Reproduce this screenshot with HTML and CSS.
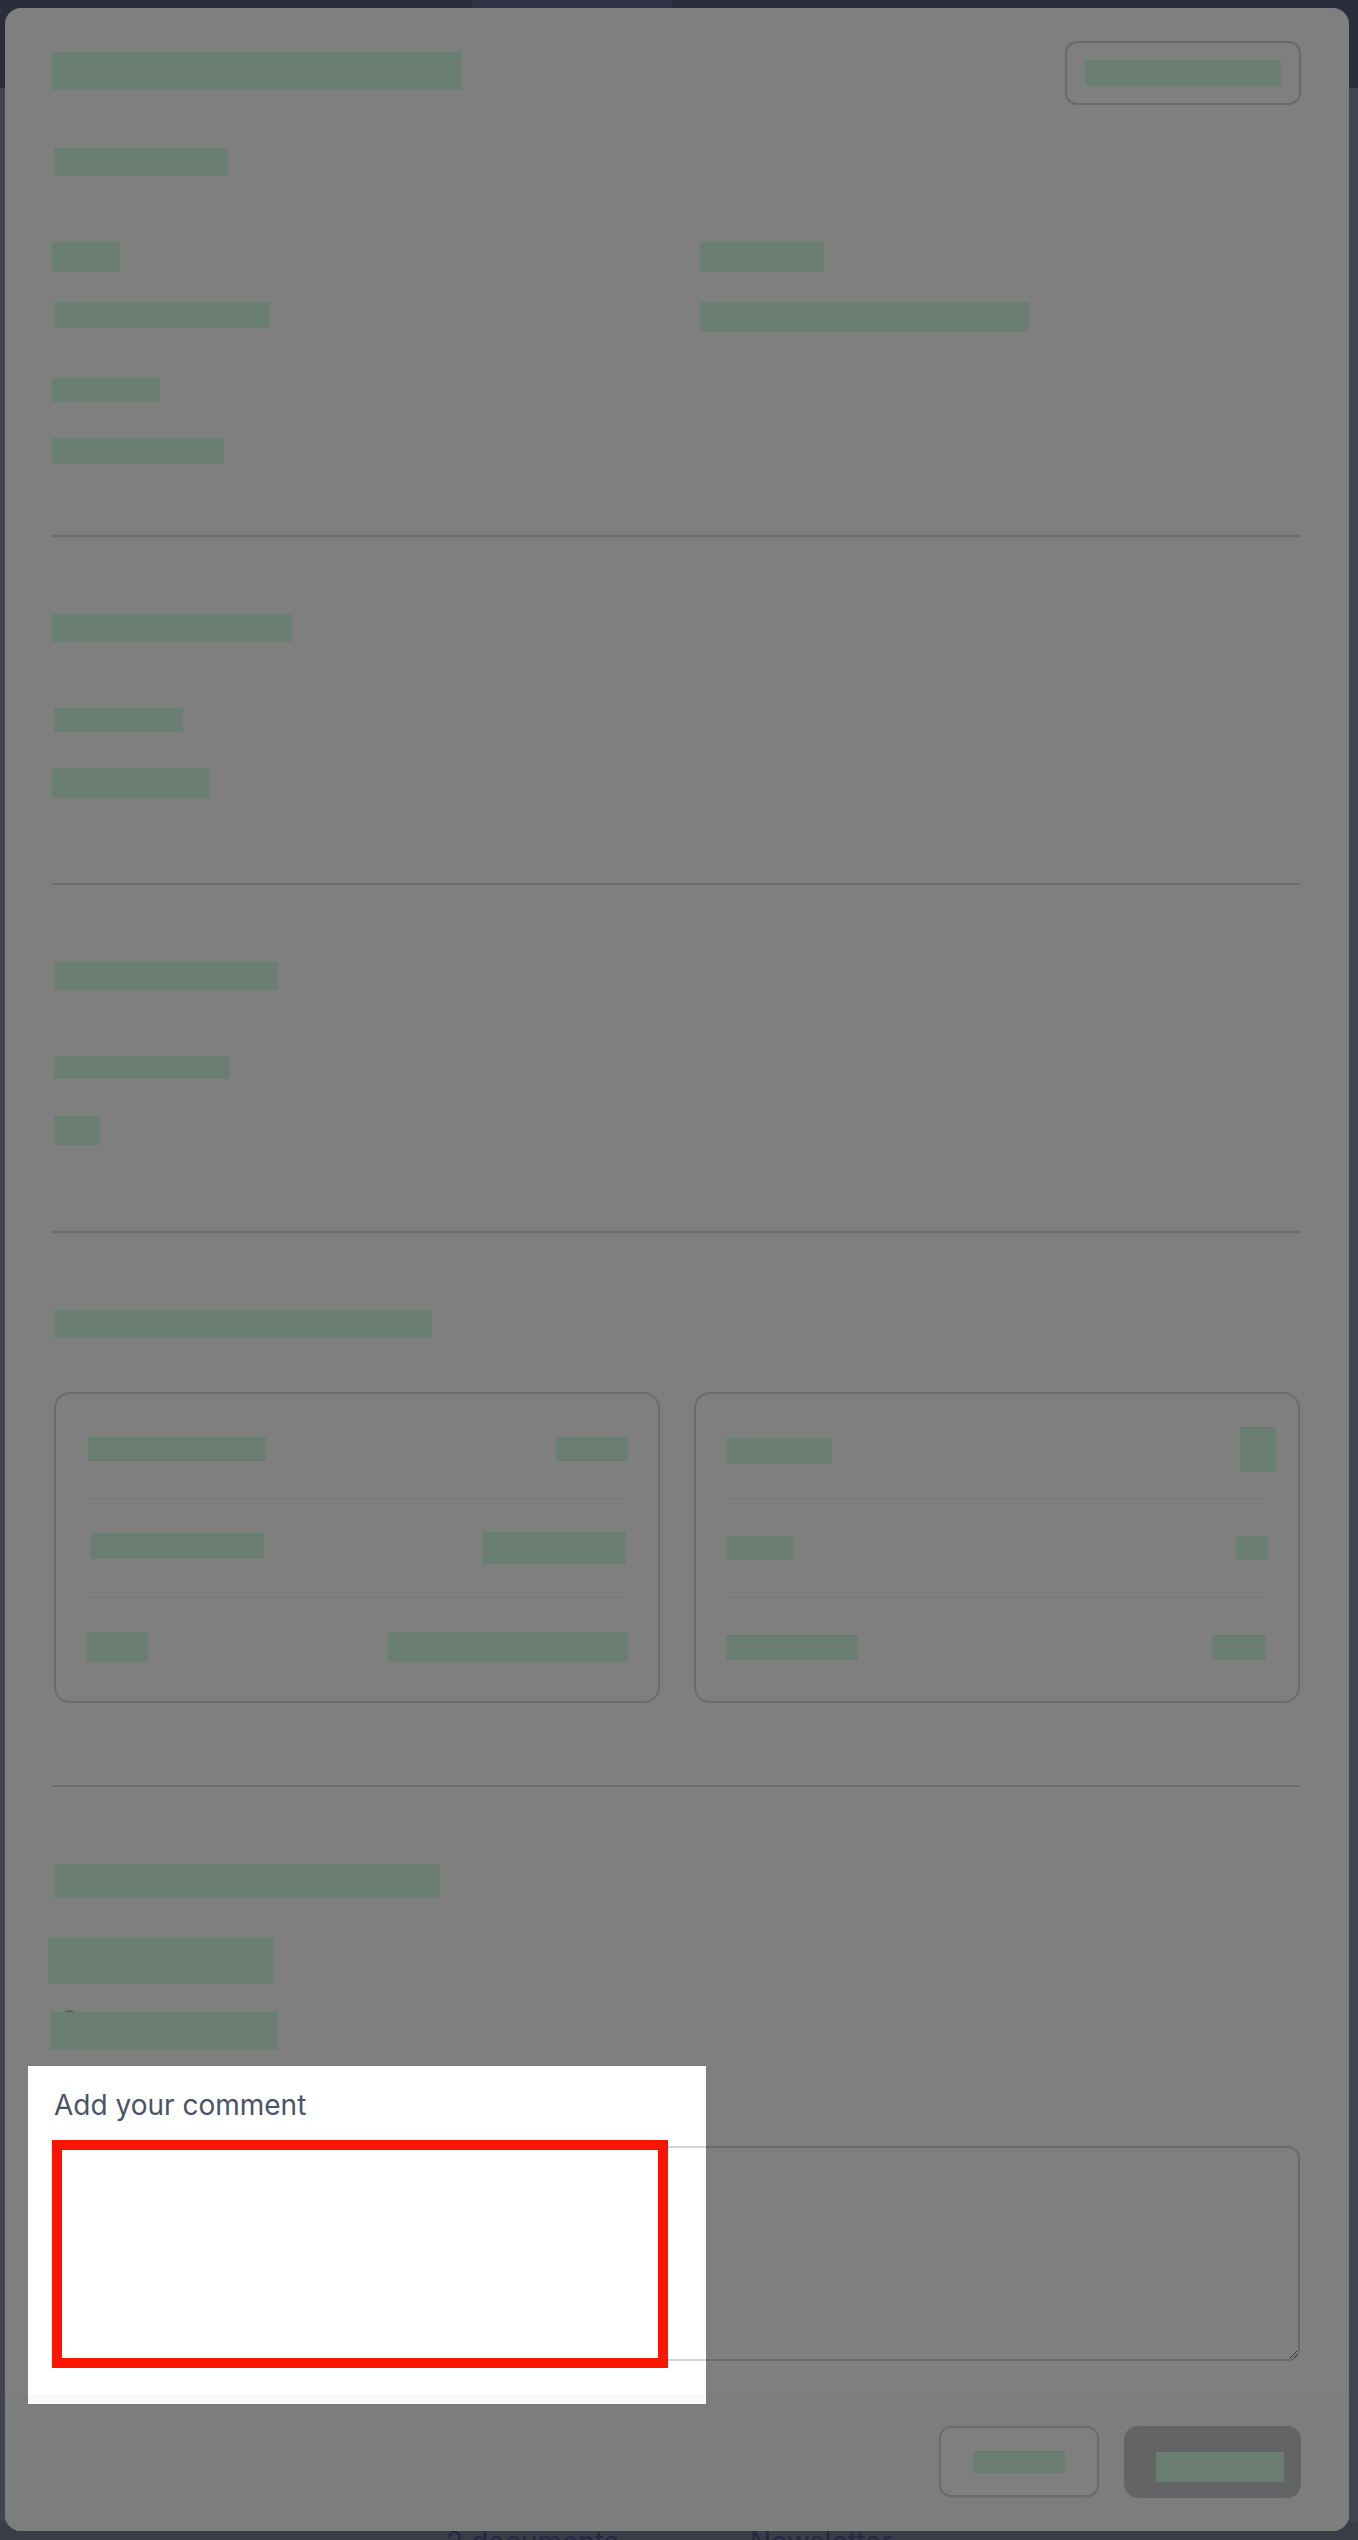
FILE: index.html
```html
<!DOCTYPE html>
<html lang="en">
<head>
<meta charset="utf-8">
<title>Review</title>
<link rel="stylesheet" href="styles.css">
</head>
<body>
<div class="app">
  <header class="topnav"><div class="navtab"></div></header>
  <main class="app-main">
    <div class="bottom-tabs">
      <span class="tab tab-docs">2 documents</span>
      <span class="tab tab-news">Newsletter</span>
    </div>
  </main>
</div>

<div class="modal">
  <div class="modal-body">
    <div class="modal-header">
      <span class="rd rd-title"></span>
      <button class="btn-outline btn-top"><span class="rd rd-top"></span></button>
    </div>
    <span class="rd rd-subtitle"></span>

    <div class="fields">
      <div class="field">
        <span class="rd f1-label"></span>
        <span class="rd f1-value"></span>
      </div>
      <div class="field">
        <span class="rd f2-label"></span>
        <span class="rd f2-value"></span>
      </div>
      <div class="field">
        <span class="rd f3-label"></span>
        <span class="rd f3-value"></span>
      </div>
    </div>

    <hr class="divider div-1">
    <section class="section">
      <span class="rd s2-head"></span>
      <span class="rd s2-label"></span>
      <span class="rd s2-value"></span>
    </section>

    <hr class="divider div-2">
    <section class="section">
      <span class="rd s3-head"></span>
      <span class="rd s3-label"></span>
      <span class="rd s3-value"></span>
    </section>

    <hr class="divider div-3">
    <section class="section">
      <span class="rd s4-head"></span>
      <div class="cards">
        <div class="card">
          <div class="card-row">
            <span class="rd c1r1l"></span><span class="rd c1r1r"></span>
          </div>
          <div class="card-row">
            <span class="rd c1r2l"></span><span class="rd c1r2r"></span>
          </div>
          <div class="card-row">
            <span class="rd c1r3l"></span><span class="rd c1r3r"></span>
          </div>
        </div>
        <div class="card">
          <div class="card-row">
            <span class="rd c2r1l"></span><span class="rd c2r1r"></span>
          </div>
          <div class="card-row">
            <span class="rd c2r2l"></span><span class="rd c2r2r"></span>
          </div>
          <div class="card-row">
            <span class="rd c2r3l"></span><span class="rd c2r3r"></span>
          </div>
        </div>
      </div>
    </section>

    <hr class="divider div-4">
    <section class="section">
      <span class="rd s5-head"></span>
      <span class="rd s5-opt1"></span>
      <div class="option">
        <span class="radio"></span>
        <span class="rd s5-opt2"></span>
      </div>
      <label class="comment-label" for="comment">Add your comment</label>
      <textarea id="comment" class="comment-input"></textarea>
    </section>
  </div>

  <footer class="modal-footer">
    <button class="btn-outline btn-cancel"><span class="rd rd-cancel"></span></button>
    <button class="btn-primary"><span class="rd rd-submit"></span></button>
  </footer>
</div>

<div class="spotlight"></div>
<div class="highlight-frame"></div>
</body>
</html>
```

FILE: styles.css
```css
html, body {
  margin: 0;
  padding: 0;
}

body {
  width: 1358px;
  height: 2540px;
  overflow: hidden;
  position: relative;
  background: #848a9e;
  font-family: Inter, "Noto Sans", "Liberation Sans", sans-serif;
}

/* ---------- page behind the dialog ---------- */
.app {
  display: flex;
  flex-direction: column;
  height: 2540px;
}

.topnav {
  height: 88px;
  background: #545a76;
  display: flex;
}

.navtab {
  margin-left: 472px;
  width: 200px;
  background: #5c6488;
}

.app-main {
  flex: 1;
  display: flex;
  flex-direction: column;
  justify-content: flex-end;
}

.bottom-tabs {
  height: 18px;
  background: #767a8c;
  display: flex;
  padding-left: 446px;
}

.tab {
  font-size: 28px;
  line-height: 40px;
  color: #4a5186;
  white-space: nowrap;
}

.tab-docs {
  width: 304px;
}

/* ---------- dialog ---------- */
.modal {
  position: absolute;
  left: 5px;
  top: 8px;
  width: 1344px;
  background: #ffffff;
  border-radius: 16px;
  overflow: hidden;
}

.modal-body {
  padding: 33px 49px 33px 47px;
}

.rd {
  display: block;
  background: #d4fee4;
}

.modal-header {
  display: flex;
  justify-content: space-between;
  align-items: flex-start;
  height: 64px;
}

.rd-title {
  width: 410px;
  height: 38px;
  margin-top: 11px;
}

.btn-outline {
  box-sizing: border-box;
  background: #ffffff;
  border: 2px solid #d3d5dc;
  border-radius: 12px;
  padding: 0;
  display: flex;
  align-items: center;
  justify-content: center;
}

.btn-top {
  width: 236px;
  height: 64px;
  margin-right: -1px;
}

.rd-top {
  width: 196px;
  height: 26px;
}

.rd-subtitle {
  width: 174px;
  height: 28px;
  margin: 43px 0 0 2px;
}

.fields {
  display: grid;
  grid-template-columns: 600px 600px;
  column-gap: 48px;
  row-gap: 46px;
  margin-top: 66px;
}

.f1-label { width: 68px; height: 30px; }
.f1-value { width: 216px; height: 26px; margin: 30px 0 0 2px; }
.f2-label { width: 124px; height: 30px; }
.f2-value { width: 329px; height: 30px; margin-top: 30px; }
.f3-label { width: 108px; height: 24px; }
.f3-value { width: 172px; height: 26px; margin-top: 36px; }

.divider {
  border: 0;
  height: 2px;
  margin: 0;
  background: #dbdbdb;
}

.div-1 { margin-top: 71px; }
.div-2 { margin-top: 85px; }
.div-3 { margin-top: 86px; }
.div-4 { margin-top: 82px; }

.section {
  padding-top: 77px;
}

.s2-head { width: 240px; height: 28px; }
.s2-label { width: 129px; height: 24px; margin: 66px 0 0 2px; }
.s2-value { width: 158px; height: 30px; margin-top: 36px; }

.s3-head { width: 224px; height: 28px; margin-left: 2px; }
.s3-label { width: 176px; height: 23px; margin: 66px 0 0 2px; }
.s3-value { width: 46px; height: 29px; margin: 37px 0 0 2px; }

.s4-head { width: 378px; height: 28px; margin-left: 2px; }

.cards {
  display: grid;
  grid-template-columns: 1fr 1fr;
  column-gap: 34px;
  margin: 54px 0 0 2px;
}

.card {
  border: 2px solid #d8d8d8;
  border-radius: 16px;
  padding: 6px 32px 5px 32px;
}

.card-row {
  height: 98px;
  display: flex;
  justify-content: space-between;
  align-items: center;
}

.card-row + .card-row {
  border-top: 1px solid #ececec;
}

.c1r1l { width: 178px; height: 24px; }
.c1r1r { width: 72px; height: 24px; margin-right: -2px; }
.c1r2l { width: 174px; height: 26px; margin-left: 2px; margin-top: -4px; }
.c1r2r { width: 144px; height: 32px; }
.c1r3l { width: 62px; height: 30px; margin-left: -2px; }
.c1r3r { width: 240px; height: 30px; margin-right: -2px; }

.c2r1l { width: 106px; height: 26px; margin-left: -2px; margin-top: 4px; }
.c2r1r { width: 36px; height: 45px; margin-right: -10px; }
.c2r2l { width: 68px; height: 24px; margin-left: -2px; }
.c2r2r { width: 32px; height: 24px; margin-right: -2px; }
.c2r3l { width: 132px; height: 25px; margin-left: -2px; }
.c2r3r { width: 54px; height: 25px; }

.s5-head { width: 386px; height: 34px; margin-left: 2px; }
.s5-opt1 { width: 226px; height: 46px; margin: 40px 0 0 -4px; }

.option {
  position: relative;
  margin: 28px 0 0 -2px;
}

.radio {
  position: absolute;
  left: 10px;
  top: -2px;
  width: 18px;
  height: 18px;
  box-sizing: border-box;
  border: 2px solid #b8b8b8;
  border-radius: 50%;
}

.s5-opt2 {
  position: relative;
  width: 228px;
  height: 38px;
}

.comment-label {
  display: block;
  margin: 36px 0 0 2px;
  font-size: 28px;
  font-weight: 400;
  line-height: 39px;
  color: #4b5366;
}

.comment-input {
  display: block;
  box-sizing: border-box;
  width: 100%;
  height: 215px;
  margin-top: 21px;
  border: 2px solid #d3d5dc;
  border-radius: 12px;
  background: #ffffff;
  resize: vertical;
  font-family: inherit;
}

.modal-footer {
  background: #f9fafb;
  display: flex;
  justify-content: flex-end;
  gap: 25px;
  padding: 32px 48px 33px 0;
}

.btn-cancel {
  width: 160px;
  height: 71px;
  box-shadow: 0 1px 2px rgba(0, 0, 0, 0.06);
}

.rd-cancel {
  width: 92px;
  height: 22px;
}

.btn-primary {
  box-sizing: border-box;
  width: 177px;
  height: 72px;
  border: 0;
  border-radius: 14px;
  background: #c6c8cc;
  padding: 26px 0 0 32px;
  display: flex;
  align-items: flex-start;
}

.rd-submit {
  width: 128px;
  height: 30px;
}

/* ---------- guided-tour spotlight ---------- */
.spotlight {
  position: absolute;
  left: 28px;
  top: 2066px;
  width: 678px;
  height: 338px;
  box-shadow: 0 0 0 4000px rgba(0, 0, 0, 0.5);
  pointer-events: none;
}

.highlight-frame {
  position: absolute;
  left: 52px;
  top: 2140px;
  width: 616px;
  height: 228px;
  box-sizing: border-box;
  border: 10px solid #fa1500;
  pointer-events: none;
}
```
